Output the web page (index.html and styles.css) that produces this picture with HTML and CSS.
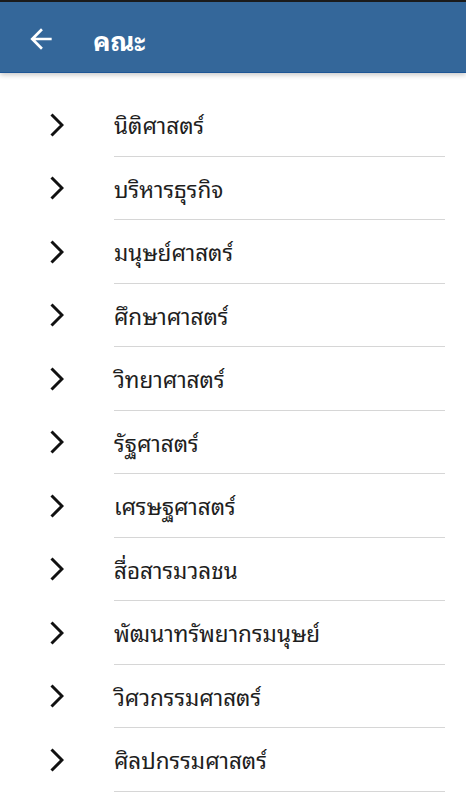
FILE: index.html
```html
<!DOCTYPE html>
<html lang="th">
<head>
  <meta charset="UTF-8" />
  <meta name="viewport" content="width=device-width, initial-scale=1.0"/>
  <title>คณะ</title>
  <link rel="stylesheet" href="styles.css">
</head>
<body>
  <header class="toolbar">
    <svg class="back" width="32" height="32" viewBox="0 0 24 24">
      <path d="M20 11H7.83l5.59-5.59L12 4l-8 8 8 8 1.41-1.41L7.83 13H20v-2z" fill="#fff"/>
    </svg>
    <h1 class="title">คณะ</h1>
  </header>

  <ul class="faculty-list">
    <li class="faculty"><svg class="chevron" width="14" height="24" viewBox="0 0 14 24"><polyline points="1.5,1.5 12,12 1.5,22.5"/></svg><span class="name">นิติศาสตร์</span></li>
    <li class="faculty"><svg class="chevron" width="14" height="24" viewBox="0 0 14 24"><polyline points="1.5,1.5 12,12 1.5,22.5"/></svg><span class="name">บริหารธุรกิจ</span></li>
    <li class="faculty"><svg class="chevron" width="14" height="24" viewBox="0 0 14 24"><polyline points="1.5,1.5 12,12 1.5,22.5"/></svg><span class="name">มนุษย์ศาสตร์</span></li>
    <li class="faculty"><svg class="chevron" width="14" height="24" viewBox="0 0 14 24"><polyline points="1.5,1.5 12,12 1.5,22.5"/></svg><span class="name">ศึกษาศาสตร์</span></li>
    <li class="faculty"><svg class="chevron" width="14" height="24" viewBox="0 0 14 24"><polyline points="1.5,1.5 12,12 1.5,22.5"/></svg><span class="name">วิทยาศาสตร์</span></li>
    <li class="faculty"><svg class="chevron" width="14" height="24" viewBox="0 0 14 24"><polyline points="1.5,1.5 12,12 1.5,22.5"/></svg><span class="name">รัฐศาสตร์</span></li>
    <li class="faculty"><svg class="chevron" width="14" height="24" viewBox="0 0 14 24"><polyline points="1.5,1.5 12,12 1.5,22.5"/></svg><span class="name">เศรษฐศาสตร์</span></li>
    <li class="faculty"><svg class="chevron" width="14" height="24" viewBox="0 0 14 24"><polyline points="1.5,1.5 12,12 1.5,22.5"/></svg><span class="name">สื่อสารมวลชน</span></li>
    <li class="faculty"><svg class="chevron" width="14" height="24" viewBox="0 0 14 24"><polyline points="1.5,1.5 12,12 1.5,22.5"/></svg><span class="name">พัฒนาทรัพยากรมนุษย์</span></li>
    <li class="faculty"><svg class="chevron" width="14" height="24" viewBox="0 0 14 24"><polyline points="1.5,1.5 12,12 1.5,22.5"/></svg><span class="name">วิศวกรรมศาสตร์</span></li>
    <li class="faculty"><svg class="chevron" width="14" height="24" viewBox="0 0 14 24"><polyline points="1.5,1.5 12,12 1.5,22.5"/></svg><span class="name">ศิลปกรรมศาสตร์</span></li>
  </ul>
</body>
</html>
```

FILE: styles.css
```css
body {
  margin: 0;
  font-family: "Noto Sans Thai Looped", "Noto Sans", Roboto, sans-serif;
  background: white;
  overflow: hidden;
}

.toolbar {
  display: flex;
  align-items: center;
  height: 67px;
  padding-top: 3px;
  background: #34679a;
  border-top: 2px solid #1b1b1b;
  border-bottom: 1px solid #1d5595;
  box-shadow: 0 2px 5px rgba(0,0,0,0.22);
  position: relative;
}

.back {
  margin-left: 25px;
}

.title {
  margin: 0 0 0 36px;
  font-size: 26px;
  font-weight: bold;
  color: white;
}

.faculty-list {
  list-style: none;
  margin: 0;
  padding: 20px 0 0 0;
}

.faculty {
  display: flex;
  align-items: center;
  height: 63.5px;
}

.chevron {
  margin-left: 50px;
  flex-shrink: 0;
  fill: none;
  stroke: #111;
  stroke-width: 3;
}

.name {
  margin-left: 50px;
  margin-right: 21px;
  flex: 1;
  height: 100%;
  box-sizing: border-box;
  display: flex;
  align-items: center;
  border-bottom: 1px solid #d6d6d6;
  font-size: 22.5px;
  color: #1e1e1e;
}
```
